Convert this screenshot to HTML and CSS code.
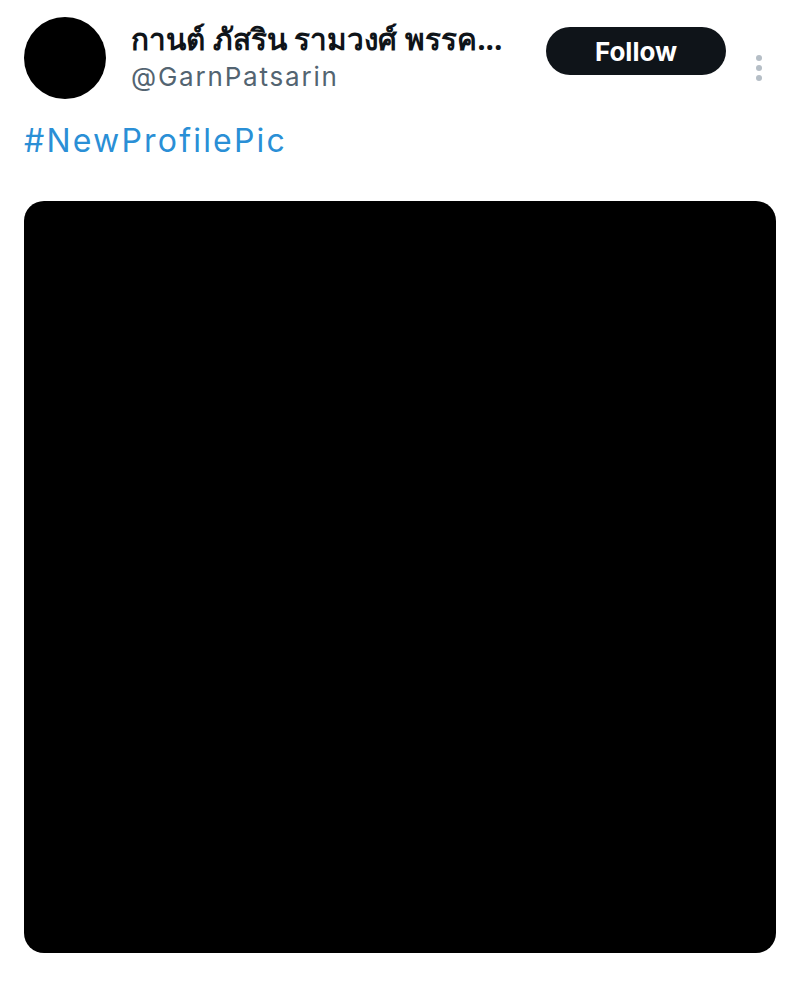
FILE: index.html
```html
<!DOCTYPE html>
<html lang="th">
<head>
<meta charset="utf-8">
<link rel="stylesheet" href="styles.css">
</head>
<body>
<div class="tweet">
  <div class="header">
    <div class="avatar"></div>
    <div class="names">
      <div class="name">กานต์ ภัสริน รามวงศ์ พรรค...</div>
      <div class="handle">@GarnPatsarin</div>
    </div>
    <button class="follow">Follow</button>
    <div class="more"><span></span><span></span><span></span></div>
  </div>
  <div class="text"><span class="tag">#NewProfilePic</span></div>
  <div class="media"></div>
</div>
</body>
</html>
```
FILE: styles.css
```css
html, body {
  margin: 0;
  padding: 0;
  background: #ffffff;
}
body {
  font-family: "Inter", "Noto Sans", "Liberation Sans", sans-serif;
}
.tweet {
  padding: 17px 24px 0 24px;
}
.header {
  display: flex;
  align-items: flex-start;
}
.avatar {
  width: 82px;
  height: 82px;
  border-radius: 50%;
  background: #000;
  flex: none;
}
.names {
  margin-left: 25px;
  flex: 1;
  min-width: 0;
  padding-top: 4px;
}
.name {
  font-family: "Open Sans", "Noto Sans", sans-serif;
  font-size: 29.7px;
  font-weight: 700;
  color: #0f1419;
  line-height: 36px;
  white-space: nowrap;
}
.handle {
  font-family: "Inter", "Liberation Sans", sans-serif;
  font-size: 26px;
  color: #536471;
  line-height: 34px;
  margin-top: 3px;
  letter-spacing: 1.8px;
}
.follow {
  margin-top: 10px;
  margin-left: 10px;
  width: 180px;
  height: 48px;
  border-radius: 24px;
  background: #0f1419;
  color: #fff;
  border: none;
  font-family: "Inter", "Liberation Sans", sans-serif;
  font-weight: 700;
  font-size: 26px;
  flex: none;
}
.more {
  width: 20px;
  margin-left: 23px;
  margin-right: 7px;
  margin-top: 38px;
  display: flex;
  flex-direction: column;
  align-items: center;
  gap: 4px;
  flex: none;
}
.more span {
  width: 6px;
  height: 6px;
  border-radius: 50%;
  background: #b5bec6;
}
.text {
  margin-top: 22px;
  font-family: "Inter", "Liberation Sans", sans-serif;
  font-size: 32px;
  line-height: 40px;
  letter-spacing: 2.2px;
}
.tag {
  color: #2a8fd6;
}
.media {
  margin-top: 40px;
  width: 752px;
  height: 752px;
  background: #000;
  border-radius: 20px;
}
```
